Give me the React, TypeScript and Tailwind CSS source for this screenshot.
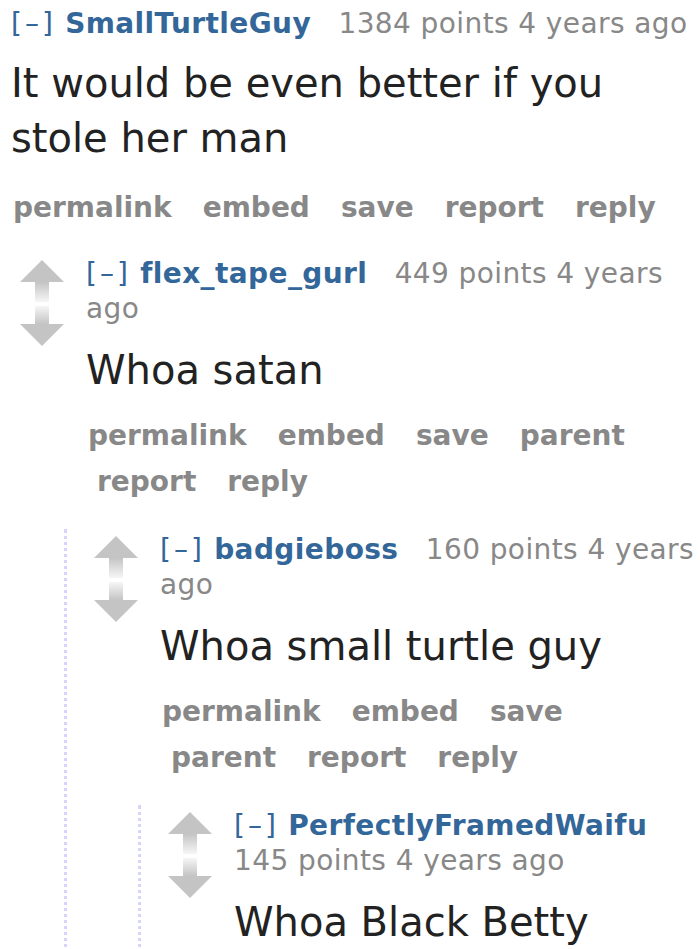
import { useId } from "react";

interface Comment {
  id: string;
  author: string;
  points: number;
  time: string;
  body: string;
  buttons: string[];
  replies?: Comment[];
}

const thread: Comment = {
  id: "c1",
  author: "SmallTurtleGuy",
  points: 1384,
  time: "4 years ago",
  body: "It would be even better if you stole her man",
  buttons: ["permalink", "embed", "save", "report", "reply"],
  replies: [
    {
      id: "c2",
      author: "flex_tape_gurl",
      points: 449,
      time: "4 years ago",
      body: "Whoa satan",
      buttons: ["permalink", "embed", "save", "parent", "report", "reply"],
      replies: [
        {
          id: "c3",
          author: "badgieboss",
          points: 160,
          time: "4 years ago",
          body: "Whoa small turtle guy",
          buttons: ["permalink", "embed", "save", "parent", "report", "reply"],
          replies: [
            {
              id: "c4",
              author: "PerfectlyFramedWaifu",
              points: 145,
              time: "4 years ago",
              body: "Whoa Black Betty",
              buttons: ["permalink", "embed", "save", "parent", "report", "reply"],
            },
          ],
        },
      ],
    },
  ],
};

function VoteArrows() {
  const id = useId();
  return (
    <svg width="44" height="86" viewBox="0 0 44 86" className="shrink-0 mt-[4px]">
      <defs>
        <linearGradient id={`${id}-up`} x1="0" y1="0" x2="0" y2="1">
          <stop offset="0" stopColor="#c4c4c4" />
          <stop offset="1" stopColor="#f6f6f6" />
        </linearGradient>
        <linearGradient id={`${id}-down`} x1="0" y1="0" x2="0" y2="1">
          <stop offset="0" stopColor="#f6f6f6" />
          <stop offset="1" stopColor="#c4c4c4" />
        </linearGradient>
      </defs>
      <polygon points="22,0 44,22 0,22" fill="#c4c4c4" />
      <rect x="15" y="22" width="14" height="20" fill={`url(#${id}-up)`} />
      <rect x="15" y="46" width="14" height="18" fill={`url(#${id}-down)`} />
      <polygon points="0,64 44,64 22,86" fill="#c4c4c4" />
    </svg>
  );
}

function CommentView({ comment, top = false }: { comment: Comment; top?: boolean }) {
  return (
    <div>
      <div className={top ? "flex pt-[6px]" : "flex pt-[3px]"}>
        {!top && <VoteArrows />}
        <div className={top ? "pl-[11px] flex-1 min-w-0" : "ml-[22px] flex-1 min-w-0"}>
          <p className="text-[28px] leading-[35px] tracking-[0.4px] text-[#888]">
            <a className="text-[#369] tracking-[3px]">[–]</a>{" "}
            <a className="font-bold text-[#369] mr-[18px]">{comment.author}</a>{" "}
            <span>{comment.points} points</span> <time>{comment.time}</time>
          </p>
          <div
            className={
              top
                ? "mt-[15px] text-[40px] leading-[55px] text-[#222]"
                : "mt-[17px] text-[40px] leading-[55px] text-[#222]"
            }
          >
            <p>{comment.body}</p>
          </div>
          <ul
            className={
              top
                ? "mt-[19px] flex flex-wrap text-[28px] leading-[46px] font-bold text-[#888]"
                : "mt-[15px] flex flex-wrap text-[28px] leading-[46px] font-bold text-[#888]"
            }
          >
            {comment.buttons.map((b, i) => (
              <li key={b} className={i === 0 ? "pl-[2px] pr-[20px]" : "pl-[11px] pr-[20px]"}>
                <a>{b}</a>
              </li>
            ))}
          </ul>
        </div>
      </div>
      {comment.replies && (
        <div
          className={
            top
              ? "mt-[22px] pl-[20px]"
              : "mt-[24px] ml-[44px] border-l-[3px] border-dotted border-[#d6d6fa] pl-[27px]"
          }
        >
          {comment.replies.map((r) => (
            <CommentView key={r.id} comment={r} />
          ))}
        </div>
      )}
    </div>
  );
}

export default function App() {
  return (
    <main className="min-h-screen w-[700px] overflow-hidden bg-white font-['DejaVu_Sans','Verdana',sans-serif] antialiased">
      <CommentView comment={thread} top />
    </main>
  );
}
